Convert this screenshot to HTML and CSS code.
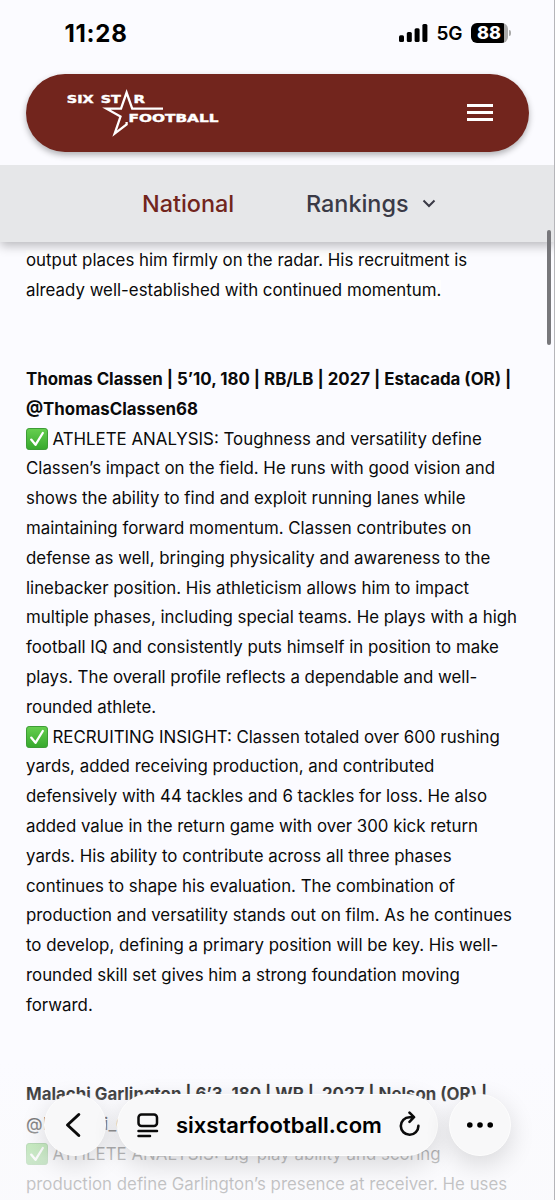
FILE: index.html
```html
<!DOCTYPE html>
<html lang="en">
<head>
<meta charset="utf-8">
<meta name="viewport" content="width=device-width">
<title>Six Star Football</title>
<link rel="stylesheet" href="styles.css">
</head>
<body>
<svg class="defs" width="0" height="0" aria-hidden="true">
  <defs>
    <linearGradient id="green" x1="0" y1="0" x2="0" y2="1"><stop offset="0" stop-color="#66cf4f"/><stop offset="1" stop-color="#36a82d"/></linearGradient>
    <symbol id="check" viewBox="0 0 22 22">
      <rect x=".5" y=".5" width="21" height="21" rx="2.6" fill="url(#green)" stroke="#3d9c36"/>
      <path d="M5.200 11.600l4.300 5.200L16.800 5" fill="none" stroke="#fff" stroke-width="2.300" stroke-linecap="round" stroke-linejoin="round"/>
    </symbol>
  </defs>
</svg>
<div class="screen">
  <div class="status">
    <span class="time">11:28</span>
    <div class="status-icons">
      <svg class="signal" width="29" height="19" viewBox="0 0 29 19"><rect x="0" y="11.200" width="5" height="6.800" rx="1.500"/><rect x="7.800" y="8" width="5" height="10" rx="1.500"/><rect x="15.600" y="4.200" width="5" height="13.800" rx="1.500"/><rect x="23.400" y="0" width="5" height="18" rx="1.500"/></svg>
      <span class="net">5G</span>
      <span class="battery"><span>88</span></span><i class="battery-tip"></i>
    </div>
  </div>
  <header class="header">
    <svg class="logo" width="154" height="50" viewBox="0 0 154 50">
      <g class="logo-text">
        <text x=".8" y="15.300" textLength="27" lengthAdjust="spacingAndGlyphs">SIX</text>
        <text x="34.700" y="15.300" textLength="20" lengthAdjust="spacingAndGlyphs">ST</text>
        <text x="67.600" y="15.300" textLength="11.500" lengthAdjust="spacingAndGlyphs">R</text>
        <text x="62.600" y="33.700" textLength="89.800" lengthAdjust="spacingAndGlyphs">FOOTBALL</text>
      </g>
      <path d="M97 20.700H66.200L60.600 4.500L55 20.700H40.500L54.500 28.600L48.700 45.600L60.600 36.500V34" fill="none" stroke="#fff" stroke-width="2.300"/>
    </svg>
    <div class="burger"><i></i><i></i><i></i></div>
  </header>
  <nav class="tabs">
    <span class="tab active">National</span>
    <span class="tab rankings">Rankings</span>
    <svg width="14" height="9" viewBox="0 0 14 9"><path d="M1.500 1.500L7 7l5.500-5.500" fill="none" stroke="#3a3a46" stroke-width="2"/></svg>
  </nav>
  <main class="article">
    <p><mark>output places him firmly on the radar. His recruitment is<br>already well-established with continued momentum.</mark></p>
    <h2>Thomas Classen | 5’10, 180 | RB/LB | 2027 | Estacada (OR) |<br>@ThomasClassen68</h2>
    <p><svg class="check"><use href="#check"/></svg>ATHLETE ANALYSIS: Toughness and versatility define<br>Classen’s impact on the field. He runs with good vision and<br>shows the ability to find and exploit running lanes while<br>maintaining forward momentum. Classen contributes on<br>defense as well, bringing physicality and awareness to the<br>linebacker position. His athleticism allows him to impact<br>multiple phases, including special teams. He plays with a high<br>football IQ and consistently puts himself in position to make<br>plays. The overall profile reflects a dependable and well-<br>rounded athlete.</p>
    <p><svg class="check"><use href="#check"/></svg>RECRUITING INSIGHT: Classen totaled over 600 rushing<br>yards, added receiving production, and contributed<br>defensively with 44 tackles and 6 tackles for loss. He also<br>added value in the return game with over 300 kick return<br>yards. His ability to contribute across all three phases<br>continues to shape his evaluation. The combination of<br>production and versatility stands out on film. As he continues<br>to develop, defining a primary position will be key. His well-<br>rounded skill set gives him a strong foundation moving<br>forward.</p>
    <h2>Malachi Garlington | 6’3, 180 | WR |&nbsp; 2027 | Nelson (OR) |<br><span class="handle">@Malachi_G</span></h2>
    <p><svg class="check"><use href="#check"/></svg>ATHLETE ANALYSIS: Big-play ability and scoring<br>production define Garlington’s presence at receiver. He uses</p>
  </main>
  <div class="fade"></div>
  <div class="scroll-thumb"></div>
  <div class="browser-bar">
    <div class="pill round back"><svg width="16" height="26" viewBox="0 0 16 26"><path d="M13.800 2.500L2.500 13L13.800 23.500" fill="none" stroke="#0b0b0b" stroke-width="3" stroke-linecap="round" stroke-linejoin="round"/></svg></div>
    <div class="pill address">
      <svg width="22" height="25" viewBox="0 0 22 25" fill="none" stroke="#0b0b0b" stroke-width="2.500" stroke-linecap="round"><rect x="1.500" y="1.500" width="18.500" height="11.500" rx="3"/><path d="M1.500 18H20M1.500 23H13"/></svg>
      <span class="url">sixstarfootball.com</span>
      <svg class="reload" width="22" height="26" viewBox="0 0 22 26" fill="none" stroke="#0b0b0b" stroke-width="2.600" stroke-linecap="round" stroke-linejoin="round"><path d="M14.500 6.200H10.500A8.800 8.800 0 1 0 19.400 14.900M10.500 1.700L15 6.200L10.500 10.800"/></svg>
    </div>
    <div class="pill round"><svg width="28" height="8" viewBox="0 0 28 8"><circle cx="3.800" cy="4" r="2.800"/><circle cx="14" cy="4" r="2.800"/><circle cx="24.200" cy="4" r="2.800"/></svg></div>
  </div>
</div>
</body>
</html>
```
FILE: styles.css
```css
* { box-sizing: border-box; }
body { margin: 0; background: #fbfbff; font-family: Inter, "Liberation Sans", sans-serif; }
.defs { position: absolute; }
.screen { position: relative; height: 1200px; overflow: hidden; border-right: 1px solid #b5b5b9; }
svg { flex: none; display: block; }
.status { height: 74px; padding: 20px 43px 0 64.500px; display: flex; justify-content: space-between; align-items: flex-start; color: #000; }
.time { font-size: 24px; line-height: 27px; font-weight: 700; letter-spacing: .7px; }
.status-icons { display: flex; align-items: center; height: 26px; }
.signal { margin-right: 9px; }
.net { font-size: 19px; font-weight: 600; width: 27px; margin-right: 7.500px; letter-spacing: -.2px; position: relative; top: .5px; }
.battery { width: 37px; height: 20px; border-radius: 6px; background: linear-gradient(90deg, #000 33px, #aaa 33px); color: #fff; font-size: 18px; line-height: 20px; font-weight: 800; padding-left: 6px; }
.battery-tip { width: 2px; height: 6px; margin-left: 1px; background: #aaa; border-radius: 0 2px 2px 0; }
.header { height: 78px; margin: 0 25px 0 26px; border-radius: 39px; background: #72251d; box-shadow: 0 3px 6px rgba(0,0,0,.3); display: flex; justify-content: space-between; padding: 14px 36px 0 40px; }
.logo-text { font-family: "DejaVu Sans", sans-serif; font-size: 10.800px; font-weight: 700; fill: #fff; stroke: #fff; stroke-width: .4px; }
.burger { width: 26px; padding-top: 16px; display: flex; flex-direction: column; gap: 4.300px; }
.burger i { height: 2.700px; background: #fff; }
.tabs { position: relative; height: 77px; margin-top: 13px; padding-left: 142px; background: #e6e7e9; box-shadow: 0 4px 10px rgba(0,0,0,.26); clip-path: inset(0 0 -20px 0); display: flex; align-items: center; font-size: 23.400px; font-weight: 550; color: #3a3a46; }
.tab { white-space: nowrap; }
.active { width: 164px; color: #72251d; }
.rankings { width: 116px; }
.article { padding: 3.900px 0 0 26px; font-size: 16.850px; line-height: 29.800px; color: #0a0a0a; white-space: nowrap; }
.article p, .article h2 { margin: 0; font-size: inherit; }
.article h2 { margin-top: 59.600px; font-weight: 700; }
.handle { font-weight: 500; letter-spacing: .4px; }
mark { color: inherit; background: #fefefe; }
.check { display: inline-block; width: 22px; height: 22px; margin-right: 4.500px; vertical-align: -5px; }
.fade { position: absolute; left: 0; right: 0; bottom: 0; height: 140px; background: linear-gradient(rgba(250,250,252,0), rgba(250,250,252,.25) 25%, rgba(250,250,252,.55) 48%, rgba(250,250,252,.75) 70%, rgba(250,250,252,.78)); }
.scroll-thumb { position: absolute; right: 3px; top: 230px; width: 4px; height: 115px; border-radius: 2px; background: #77777b; }
.browser-bar { position: absolute; left: 44px; top: 1094px; display: flex; gap: 11px; }
.pill { height: 62px; border-radius: 31px; background: #f8f8f9; border: 1px solid #fdfdfd; box-shadow: 0 8px 26px rgba(0,0,0,.14); display: flex; align-items: center; }
.round { width: 62px; justify-content: center; }
.back { padding-right: 4px; }
.address { width: 321px; padding-left: 19px; }
.url { width: 223px; margin-left: 17px; font-size: 22px; font-weight: 600; }
.reload { margin-top: -3px; }
```
